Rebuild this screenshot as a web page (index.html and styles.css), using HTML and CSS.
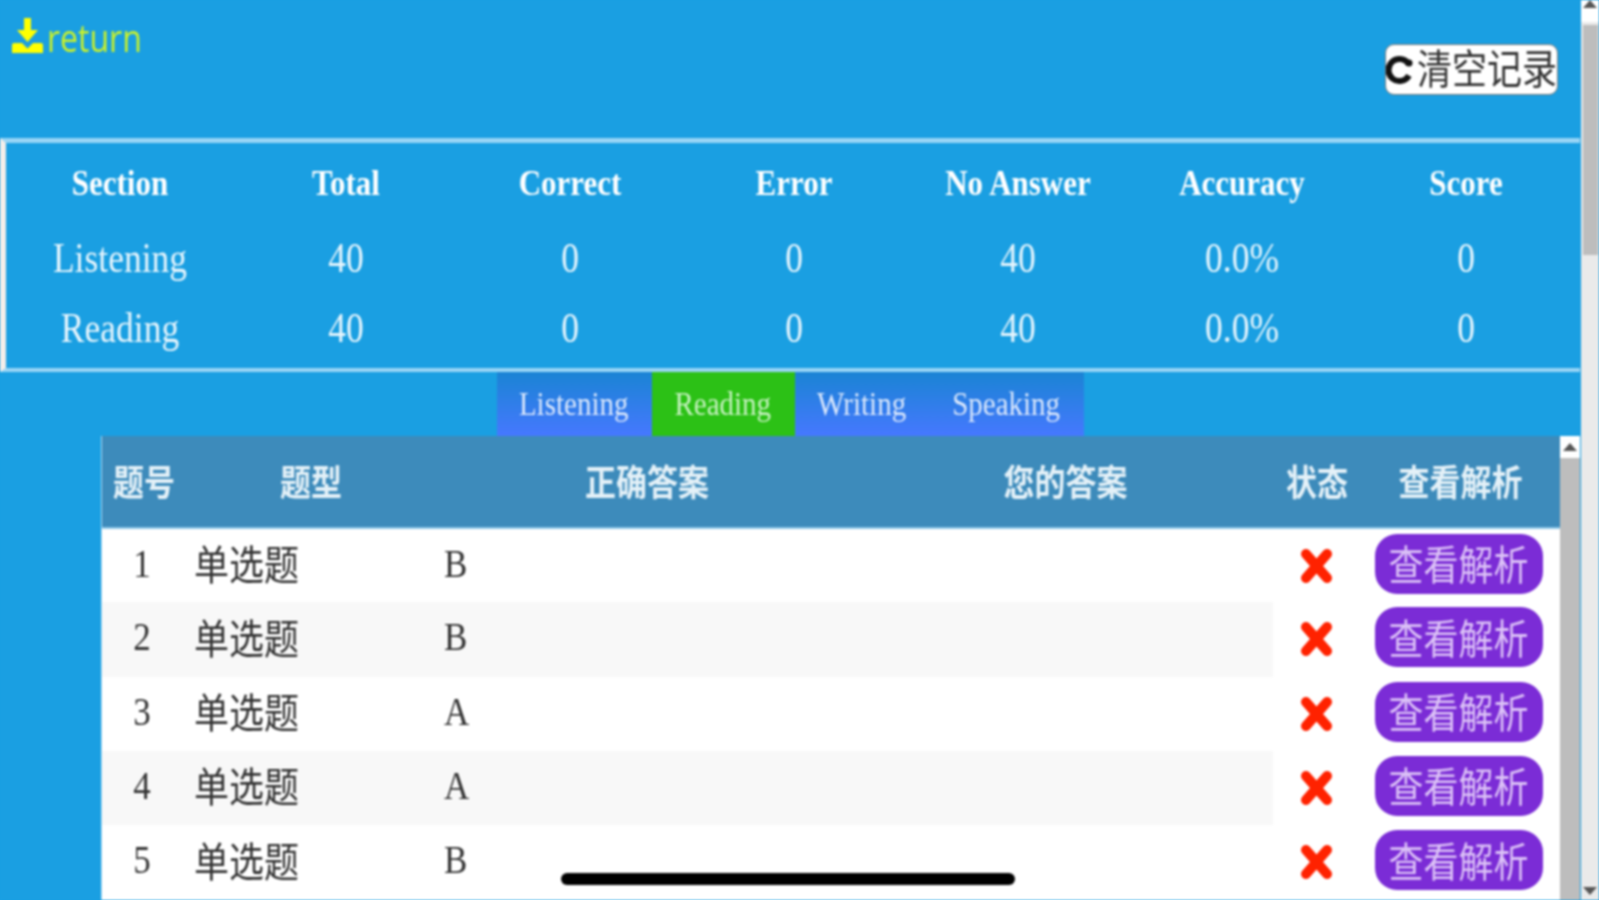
FILE: index.html
```html
<!DOCTYPE html>
<html lang="zh">
<head>
<meta charset="utf-8">
<title>Results</title>
<link rel="stylesheet" href="styles.css">
</head>
<body>
<div class="screen">
  <main class="page">
    <header class="topbar">
      <a class="return">
        <svg class="return-icon" viewBox="0 0 31 35"><path d="M12 0h7v12h7L15.5 24 5 12h7zM2 25h8l5.500 5.500L21 25h8a2 2 0 0 1 2 2v8H0v-8a2 2 0 0 1 2-2z"/></svg>
        <span class="st return-text">return</span>
      </a>
      <button class="clear">
        <svg class="clear-icon" viewBox="0 0 28 30"><path d="M23 9.500A11 11 0 1 0 23 20.500" fill="none" stroke="#111" stroke-width="6"/><circle cx="23" cy="8" r="3.500" fill="#111"/></svg>
        <span class="st cjk-high">清空记录</span>
      </button>
    </header>

    <section class="score">
      <div class="score-row head">
        <div><span class="st">Section</span></div><div><span class="st">Total</span></div><div><span class="st">Correct</span></div><div><span class="st">Error</span></div><div><span class="st">No Answer</span></div><div><span class="st">Accuracy</span></div><div><span class="st">Score</span></div>
      </div>
      <div class="score-row">
        <div><span class="st">Listening</span></div><div><span class="st">40</span></div><div><span class="st">0</span></div><div><span class="st">0</span></div><div><span class="st">40</span></div><div><span class="st">0.0%</span></div><div><span class="st">0</span></div>
      </div>
      <div class="score-row">
        <div><span class="st">Reading</span></div><div><span class="st">40</span></div><div><span class="st">0</span></div><div><span class="st">0</span></div><div><span class="st">40</span></div><div><span class="st">0.0%</span></div><div><span class="st">0</span></div>
      </div>
    </section>

    <nav class="tabs">
      <a class="tab"><span class="st">Listening</span></a>
      <a class="tab active"><span class="st">Reading</span></a>
      <a class="tab"><span class="st">Writing</span></a>
      <a class="tab"><span class="st">Speaking</span></a>
    </nav>

    <section class="panel">
      <div class="table-wrap">
        <table class="answers">
          <colgroup>
            <col class="c1"><col class="c2"><col class="c3"><col class="c4"><col class="c5"><col class="c6">
          </colgroup>
          <thead>
            <tr><th><span class="st">题号</span></th><th><span class="st">题型</span></th><th><span class="st">正确答案</span></th><th><span class="st">您的答案</span></th><th><span class="st">状态</span></th><th><span class="st">查看解析</span></th></tr>
          </thead>
          <tbody>
            <tr>
              <td class="num"><span class="st">1</span></td><td><span class="st cjk">单选题</span></td><td><span class="st">B</span></td><td></td>
              <td class="state"><svg class="cross" viewBox="0 0 33 36"><path d="M6 6l21 24M27 6L6 30"/></svg></td>
              <td class="act"><button class="view"><span class="st cjk">查看解析</span></button></td>
            </tr>
            <tr>
              <td class="num"><span class="st">2</span></td><td><span class="st cjk">单选题</span></td><td><span class="st">B</span></td><td></td>
              <td class="state"><svg class="cross" viewBox="0 0 33 36"><path d="M6 6l21 24M27 6L6 30"/></svg></td>
              <td class="act"><button class="view"><span class="st cjk">查看解析</span></button></td>
            </tr>
            <tr>
              <td class="num"><span class="st">3</span></td><td><span class="st cjk">单选题</span></td><td><span class="st">A</span></td><td></td>
              <td class="state"><svg class="cross" viewBox="0 0 33 36"><path d="M6 6l21 24M27 6L6 30"/></svg></td>
              <td class="act"><button class="view"><span class="st cjk">查看解析</span></button></td>
            </tr>
            <tr>
              <td class="num"><span class="st">4</span></td><td><span class="st cjk">单选题</span></td><td><span class="st">A</span></td><td></td>
              <td class="state"><svg class="cross" viewBox="0 0 33 36"><path d="M6 6l21 24M27 6L6 30"/></svg></td>
              <td class="act"><button class="view"><span class="st cjk">查看解析</span></button></td>
            </tr>
            <tr>
              <td class="num"><span class="st">5</span></td><td><span class="st cjk">单选题</span></td><td><span class="st">B</span></td><td></td>
              <td class="state"><svg class="cross" viewBox="0 0 33 36"><path d="M6 6l21 24M27 6L6 30"/></svg></td>
              <td class="act"><button class="view"><span class="st cjk">查看解析</span></button></td>
            </tr>
          </tbody>
        </table>
      </div>
      <div class="inner-scroll">
        <div class="sb-btn"><svg class="sb-arrow" viewBox="0 0 14 8"><path d="M7 0l7 8H0z"/></svg></div>
        <div class="inner-thumb"></div>
      </div>
    </section>
  </main>

  <aside class="outer-scroll">
    <div class="outer-btn"><svg class="sb-arrow" viewBox="0 0 14 8"><path d="M7 0l7 8H0z"/></svg></div>
    <div class="outer-track"><div class="outer-thumb"></div></div>
    <div class="outer-btn down"><svg class="sb-arrow" viewBox="0 0 14 8"><path d="M0 0h14L7 8z"/></svg></div>
  </aside>

  <div class="home-bar"></div>
</div>
</body>
</html>
```
FILE: styles.css
```css
* { box-sizing: border-box; }
html, body { margin: 0; height: 900px; overflow: hidden; }
body {
  font-family: "Liberation Serif", "Noto Sans CJK SC", serif;
  background: #1a9fe2;
}
.screen {
  position: relative;
  display: flex;
  width: 1599px;
  height: 900px;
  overflow: hidden;
  filter: blur(1.1px);
}
.st { display: inline-block; transform: scaleY(1.17); }
.st.cjk { transform: translateY(-2px) scaleY(1.17); }
.st.cjk-high { transform: translateY(-4px) scaleY(1.17); }

.page {
  width: 1581px;
  flex: none;
  height: 900px;
  background: #1a9fe2;
  overflow: hidden;
}

.topbar {
  height: 138px;
  display: flex;
  justify-content: space-between;
  align-items: flex-start;
  padding: 0 23px 0 12px;
}
.return {
  display: flex;
  align-items: center;
  margin-top: 18px;
  height: 35px;
  gap: 4px;
  font: 500 32px/35px "Open Sans", sans-serif;
  color: #c9f12a;
}
.return-text { margin-top: 4px; }
.return-icon { width: 31px; height: 35px; fill: #ffff00; }
.clear {
  display: flex;
  align-items: center;
  width: 173px;
  height: 51px;
  margin-top: 44px;
  padding: 0;
  gap: 3px;
  background: #fff;
  border: 1px solid #777;
  border-radius: 9px;
  font: 35px/1 "Noto Sans CJK SC", sans-serif;
  color: #333;
  white-space: nowrap;
}
.clear-icon { width: 28px; height: 30px; flex: none; }

.score {
  width: 1580px;
  height: 234px;
  border-top: 5px solid #98d5f6;
  border-bottom: 4px solid #98d5f6;
  border-left: 6px solid #f4eeea;
  color: #e6f5fd;
}
.score-row {
  display: grid;
  grid-template-columns: 228px repeat(6, 224px);
  height: 70px;
  align-items: center;
  text-align: center;
  font-size: 35.500px;
  line-height: 40px;
}
.score-row.head {
  height: 80px;
  font-size: 31px;
  font-weight: 700;
  color: #fff;
}

.tabs {
  display: flex;
  justify-content: center;
  height: 64px;
}
.tab {
  display: flex;
  align-items: center;
  justify-content: center;
  padding: 0 24px 2px 22px;
  font-size: 29px;
  color: #dbe8fc;
  background: linear-gradient(#1a84d4, #4678ff);
}
.tab.active {
  background: #2cc116;
  color: #c8f2c2;
}

.panel {
  display: flex;
  margin-left: 101px;
  width: 1479px;
  height: 470px;
  border-left: 1px solid #a8d8f2;
}
.table-wrap {
  flex: 1;
  min-width: 0;
  background: #fff;
  overflow: hidden;
}
.answers {
  width: 100%;
  table-layout: fixed;
  border-collapse: collapse;
}
.c1 { width: 84px; }
.c2 { width: 250px; }
.c3 { width: 422px; }
.c4 { width: 415px; }
.c5 { width: 88px; }
.c6 { width: 199px; }

.answers th {
  height: 92px;
  padding: 0 0 2px;
  background: #3d8bbb;
  border-bottom: 2px solid #8fc8e8;
  color: #e4f1f8;
  font-size: 31px;
  font-weight: 700;
  text-align: center;
}
.answers td {
  height: 74.250px;
  padding: 0 8px 4px;
  font-size: 35px;
  color: #333;
}
.answers tbody tr:nth-child(even) td { background: #f8f8f8; }
.answers tbody tr:nth-child(even) td.state,
.answers tbody tr:nth-child(even) td.act { background: #fff; }
.answers td.num { text-align: center; padding: 0 12px 4px 8px; }
.answers td.state { text-align: center; padding: 0 2px 0 0; }
.answers td.act { text-align: center; padding: 0 4px 4px 0; }

.cross {
  display: block;
  width: 33px;
  height: 36px;
  margin: 0 auto;
  fill: none;
  stroke: #ff2200;
  stroke-width: 10;
  stroke-linecap: round;
}
.view {
  display: block;
  width: 168px;
  height: 60px;
  margin: 0 auto;
  padding: 0;
  border: 0;
  border-radius: 22px;
  background: #7b2cd6;
  color: #dcc2f7;
  font: 35px/1 "Noto Sans CJK SC", sans-serif;
}

.inner-scroll {
  width: 20px;
  flex: none;
  display: flex;
  flex-direction: column;
  background: #bdbdbd;
}
.sb-btn {
  height: 22px;
  background: #fff;
  display: flex;
  align-items: center;
  justify-content: center;
}
.sb-arrow { width: 14px; height: 8px; fill: #555; }
.inner-thumb { flex: 1; background: #bdbdbd; }

.outer-scroll {
  width: 18px;
  flex: none;
  height: 900px;
  display: flex;
  flex-direction: column;
  background: #eaeaea;
}
.outer-btn {
  height: 22px;
  background: #fff;
  display: flex;
  align-items: flex-start;
  justify-content: center;
}
.outer-btn.down {
  height: 18px;
  background: #eaeaea;
  align-items: center;
}
.outer-track {
  flex: 1;
  padding: 3px 1px 0 2px;
}
.outer-thumb {
  height: 230px;
  background: #bdbdbd;
}

.home-bar {
  position: absolute;
  left: 561px;
  top: 873px;
  width: 454px;
  height: 12px;
  border-radius: 6px;
  background: #000;
}
```
